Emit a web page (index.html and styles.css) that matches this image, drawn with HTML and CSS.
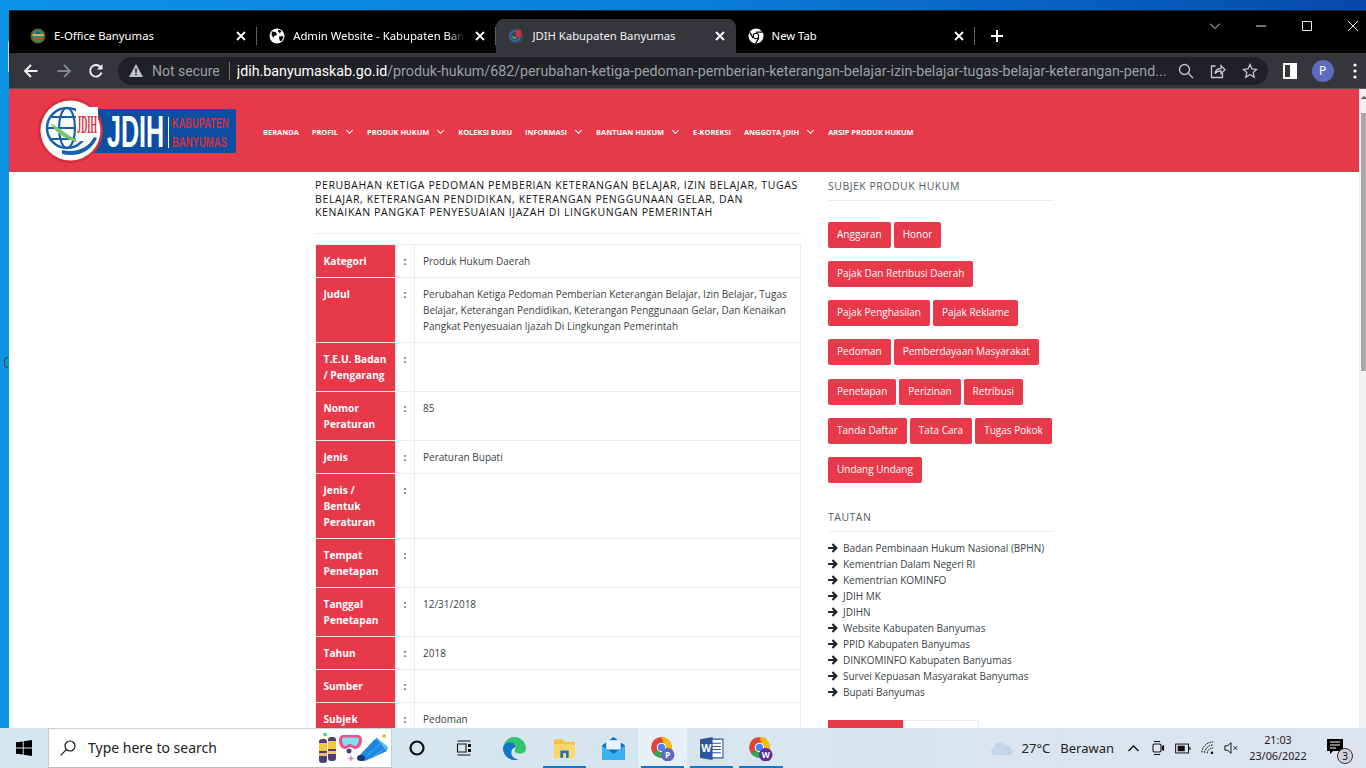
FILE: index.html
```html
<!DOCTYPE html>
<html lang="id">
<head>
<meta charset="utf-8">
<title>JDIH Kabupaten Banyumas</title>
<link rel="stylesheet" href="styles.css">
</head>
<body>
<div class="desktop">
  <span class="edge-sliver"></span>
  <span class="edge-mark"></span>
  <div class="window">
    <div class="tabstrip">
      <div class="tab sep">
        <svg class="fav" viewBox="0 0 16 16"><circle cx="8" cy="8" r="7.5" fill="#6b5a2a"/><circle cx="8" cy="8" r="6" fill="#2f8f6a"/><path d="M2.5 6h11v2h-11z" fill="#d8b13a"/><path d="M3 10h10v2H3z" fill="#c8452f"/><path d="M5 6l3-3 3 3z" fill="#1d4f8f"/></svg>
        <span class="tab-title">E-Office Banyumas</span>
        <svg class="close" viewBox="0 0 10 10"><path d="M1 1l8 8M9 1l-8 8"/></svg>
      </div>
      <div class="tab sep">
        <svg class="fav" viewBox="0 0 16 16"><circle cx="8" cy="8" r="7.5" fill="#fff"/><path d="M3 3.5l3.5.5 1.5 2-1 1.5-2 .5-.5 2-2-3zM9.5 1.500l3 1.500-1.500 2-2-1zM10 8.500l3.500-.5 1 1.500-2.500 4-1.500-1.500z" fill="#000"/></svg>
        <span class="tab-title fade">Admin Website - Kabupaten Banyumas</span>
        <svg class="close" viewBox="0 0 10 10"><path d="M1 1l8 8M9 1l-8 8"/></svg>
      </div>
      <div class="tab active">
        <svg class="fav" viewBox="0 0 16 16"><circle cx="8" cy="8" r="7.5" fill="#3a4a5a"/><circle cx="7" cy="8" r="5" fill="none" stroke="#2a6fb5" stroke-width="1.5"/><path d="M8 2h5v7H8z" fill="#d5303c"/><path d="M3.5 8l4 1 1 2-3 0z" fill="#5cab55"/></svg>
        <span class="tab-title">JDIH Kabupaten Banyumas</span>
        <svg class="close" viewBox="0 0 10 10"><path d="M1 1l8 8M9 1l-8 8"/></svg>
      </div>
      <div class="tab sep">
        <svg class="fav" viewBox="0 0 16 16"><circle cx="8" cy="8" r="7.5" fill="#fff"/><circle cx="8" cy="8" r="3.2" fill="#000"/><circle cx="8" cy="8" r="2.2" fill="#fff"/><path d="M8 4.2h6.4M5 9.8L1.8 4.4M10.9 9.8l-3.2 5.6" stroke="#000" stroke-width="1.3"/></svg>
        <span class="tab-title">New Tab</span>
        <svg class="close" viewBox="0 0 10 10"><path d="M1 1l8 8M9 1l-8 8"/></svg>
      </div>
      <svg class="newtab" viewBox="0 0 14 14"><path d="M7 1v12M1 7h12"/></svg>
      <div class="winctrls">
        <span class="winbtn"><svg viewBox="0 0 10 10"><path d="M0 2.5l5 5 5-5"/></svg></span>
        <span class="winbtn"><svg viewBox="0 0 10 10"><path d="M0 5h10"/></svg></span>
        <span class="winbtn"><svg viewBox="0 0 10 10"><path d="M.5.5h9v9h-9z"/></svg></span>
        <span class="winbtn"><svg viewBox="0 0 10 10"><path d="M0 0l10 10M10 0L0 10"/></svg></span>
      </div>
    </div>

    <div class="toolbar">
      <span class="tbtn"><svg viewBox="0 0 16 16" class="ic"><path d="M14.5 8H2M8 2L2 8l6 6"/></svg></span>
      <span class="tbtn dim"><svg viewBox="0 0 16 16" class="ic"><path d="M1.5 8H14M8 2l6 6-6 6"/></svg></span>
      <span class="tbtn"><svg viewBox="0 0 16 16" class="ic"><path d="M13.5 9.5A5.8 5.8 0 1 1 12.3 4"/><path class="solid" d="M14.5 1v5.5H9z"/></svg></span>
      <div class="omnibox">
        <svg class="warn" viewBox="0 0 14 13"><path d="M7 0l7 13H0z" fill="#bdc1c6"/><path d="M6.3 4.5h1.4v4.3H6.3zM6.3 9.8h1.4v1.4H6.3z" fill="#202124"/></svg>
        <span class="insecure">Not secure</span>
        <span class="omnisep"></span>
        <span class="url"><b>jdih.banyumaskab.go.id</b>/produk-hukum/682/perubahan-ketiga-pedoman-pemberian-keterangan-belajar-izin-belajar-tugas-belajar-keterangan-pend...</span>
        <svg class="oicon" viewBox="0 0 16 16"><circle cx="6.5" cy="6.5" r="5"/><path d="M10.2 10.2L15 15"/></svg>
        <svg class="oicon" viewBox="0 0 16 16"><path d="M5.5 3H1.5v11.5h11V10"/><path d="M5 10.5c.5-3.5 3-5 6-5V2.5l4 4.2-4 4V8c-2.500 0-4.500.5-6 2.500z"/></svg>
        <svg class="oicon" viewBox="0 0 16 16"><path d="M8 1.500l2 4.400 4.700.5-3.500 3.200 1 4.700L8 11.500l-4.200 2.800 1-4.700L1.300 6.400 6 5.900z"/></svg>
      </div>
      <span class="tbtn side"><svg viewBox="0 0 14 16" class="panel"><path d="M0 0h14v16H0z" fill="#fff"/><path d="M2 2h5v12H2z" fill="#35363a"/></svg></span>
      <span class="tbtn"><span class="avatar">P</span></span>
      <span class="tbtn"><svg viewBox="0 0 4 16" class="dots"><circle cx="2" cy="2" r="1.600"/><circle cx="2" cy="8" r="1.600"/><circle cx="2" cy="14" r="1.600"/></svg></span>
    </div>

    <div class="viewport">
      <div class="page">
        <header class="site-header">
          <svg class="logo" viewBox="0 0 198 68">
            <rect x="30" y="12" width="168" height="44" rx="2" fill="#0b4ea2"/>
            <circle cx="32.500" cy="33.500" r="32.500" fill="#d42c39"/>
            <circle cx="32.500" cy="33.500" r="30" fill="#fff"/>
            <circle cx="29" cy="31" r="20" fill="none" stroke="#1660ad" stroke-width="2.500"/>
            <ellipse cx="29" cy="31" rx="8" ry="20" fill="none" stroke="#1660ad" stroke-width="2.200"/>
            <path d="M9 31h40M13 20h32M13 42h32" stroke="#1660ad" stroke-width="2.200"/>
            <path d="M12 26l9 5 8 6 6 4 10 2-8 2-11-5-8-6z" fill="#7cc36b"/>
            <path d="M38 10h22v34H38z" fill="#fff"/>
            <text class="logo-mini" transform="translate(39 36) scale(.32 1)">JDIH</text>
            <path d="M24 53c13 3 26-1 32-13l3 1c-5 13-20 20-35 16z" fill="#1660ad"/>
            <text class="logo-main" transform="translate(69 50) scale(.57 1)">JDIH</text>
            <path d="M130 20h1v31h-1z" fill="#fff"/>
            <text class="logo-sub" transform="translate(134 31) scale(.617 1)">KABUPATEN</text>
            <text class="logo-sub" transform="translate(134 50) scale(.634 1)">BANYUMAS</text>
          </svg>
          <nav class="nav">
            <a class="nav-item">BERANDA</a>
            <a class="nav-item caret">PROFIL</a>
            <a class="nav-item caret">PRODUK HUKUM</a>
            <a class="nav-item">KOLEKSI BUKU</a>
            <a class="nav-item caret">INFORMASI</a>
            <a class="nav-item caret">BANTUAN HUKUM</a>
            <a class="nav-item">E-KOREKSI</a>
            <a class="nav-item caret">ANGGOTA JDIH</a>
            <a class="nav-item">ARSIP PRODUK HUKUM</a>
          </nav>
        </header>
        <div class="content">
          <main class="main-col">
            <h1 class="doc-title">Perubahan Ketiga Pedoman Pemberian Keterangan Belajar, Izin Belajar, Tugas Belajar, Keterangan Pendidikan, Keterangan Penggunaan Gelar, Dan Kenaikan Pangkat Penyesuaian Ijazah Di Lingkungan Pemerintah</h1>
            <table class="doc-table">
              <colgroup><col class="c-label"><col class="c-colon"><col class="c-value"></colgroup>
              <tr><th>Kategori</th><td class="colon">:</td><td>Produk Hukum Daerah</td></tr>
              <tr><th>Judul</th><td class="colon">:</td><td>Perubahan Ketiga Pedoman Pemberian Keterangan Belajar, Izin Belajar, Tugas Belajar, Keterangan Pendidikan, Keterangan Penggunaan Gelar, Dan Kenaikan Pangkat Penyesuaian Ijazah Di Lingkungan Pemerintah</td></tr>
              <tr><th>T.E.U. Badan / Pengarang</th><td class="colon">:</td><td></td></tr>
              <tr><th>Nomor Peraturan</th><td class="colon">:</td><td>85</td></tr>
              <tr><th>Jenis</th><td class="colon">:</td><td>Peraturan Bupati</td></tr>
              <tr><th>Jenis / Bentuk Peraturan</th><td class="colon">:</td><td></td></tr>
              <tr><th>Tempat Penetapan</th><td class="colon">:</td><td></td></tr>
              <tr><th>Tanggal Penetapan</th><td class="colon">:</td><td>12/31/2018</td></tr>
              <tr><th>Tahun</th><td class="colon">:</td><td>2018</td></tr>
              <tr><th>Sumber</th><td class="colon">:</td><td></td></tr>
              <tr><th>Subjek</th><td class="colon">:</td><td>Pedoman</td></tr>
            </table>
          </main>
          <aside class="side-col">
            <h2 class="side-title">Subjek Produk Hukum</h2>
            <div class="chips">
              <a class="chip">Anggaran</a><a class="chip">Honor</a>
              <a class="chip">Pajak Dan Retribusi Daerah</a>
              <a class="chip">Pajak Penghasilan</a><a class="chip">Pajak Reklame</a>
              <a class="chip">Pedoman</a><a class="chip">Pemberdayaan Masyarakat</a>
              <a class="chip">Penetapan</a><a class="chip">Perizinan</a><a class="chip">Retribusi</a>
              <a class="chip">Tanda Daftar</a><a class="chip">Tata Cara</a><a class="chip">Tugas Pokok</a>
              <a class="chip">Undang Undang</a>
            </div>
            <h2 class="side-title links-title">Tautan</h2>
            <ul class="links">
              <li><svg viewBox="0 0 10 10"><path d="M5.200.3l4.700 4.700-4.700 4.700-1.500-1.500 2-2.100H.1V3.900h5.600l-2-2.100z"/></svg>Badan Pembinaan Hukum Nasional (BPHN)</li>
              <li><svg viewBox="0 0 10 10"><path d="M5.200.3l4.700 4.700-4.700 4.700-1.500-1.500 2-2.100H.1V3.900h5.600l-2-2.100z"/></svg>Kementrian Dalam Negeri RI</li>
              <li><svg viewBox="0 0 10 10"><path d="M5.200.3l4.700 4.700-4.700 4.700-1.500-1.500 2-2.100H.1V3.900h5.600l-2-2.100z"/></svg>Kementrian KOMINFO</li>
              <li><svg viewBox="0 0 10 10"><path d="M5.200.3l4.700 4.700-4.700 4.700-1.500-1.500 2-2.100H.1V3.900h5.600l-2-2.100z"/></svg>JDIH MK</li>
              <li><svg viewBox="0 0 10 10"><path d="M5.200.3l4.700 4.700-4.700 4.700-1.500-1.500 2-2.100H.1V3.900h5.600l-2-2.100z"/></svg>JDIHN</li>
              <li><svg viewBox="0 0 10 10"><path d="M5.200.3l4.700 4.700-4.700 4.700-1.500-1.500 2-2.100H.1V3.900h5.600l-2-2.100z"/></svg>Website Kabupaten Banyumas</li>
              <li><svg viewBox="0 0 10 10"><path d="M5.200.3l4.700 4.700-4.700 4.700-1.500-1.500 2-2.100H.1V3.900h5.600l-2-2.100z"/></svg>PPID Kabupaten Banyumas</li>
              <li><svg viewBox="0 0 10 10"><path d="M5.200.3l4.700 4.700-4.700 4.700-1.500-1.500 2-2.100H.1V3.900h5.600l-2-2.100z"/></svg>DINKOMINFO Kabupaten Banyumas</li>
              <li><svg viewBox="0 0 10 10"><path d="M5.200.3l4.700 4.700-4.700 4.700-1.500-1.500 2-2.100H.1V3.900h5.600l-2-2.100z"/></svg>Survei Kepuasan Masyarakat Banyumas</li>
              <li><svg viewBox="0 0 10 10"><path d="M5.200.3l4.700 4.700-4.700 4.700-1.500-1.500 2-2.100H.1V3.900h5.600l-2-2.100z"/></svg>Bupati Banyumas</li>
            </ul>
            <div class="side-tabs"><span class="side-tab on"></span><span class="side-tab"></span></div>
          </aside>
        </div>
      </div>
      <div class="scrollbar"><span class="scroll-up"></span><span class="thumb"></span></div>
    </div>
  </div>

  <footer class="taskbar">
    <span class="start"><svg viewBox="0 0 16 16"><path d="M0 2.300l6.800-.9v6.200H0zM7.700 1.300L16 0v7.600H7.700zM0 8.400h6.800v6.200L0 13.700zM7.700 8.400H16V16l-8.300-1.200z"/></svg></span>
    <div class="searchbox">
      <svg class="glass" viewBox="0 0 16 16"><circle cx="10" cy="6" r="5"/><path d="M6.300 9.700L.7 15.300"/></svg>
      <span class="search-text">Type here to search</span>
      <svg class="doodle" viewBox="0 0 72 32">
        <circle cx="8" cy="2.500" r="1.800" fill="#3fcf7a"/>
        <rect x="2" y="7" width="8" height="24" rx="3" fill="#4a3f78"/><rect x="2" y="11" width="8" height="8" fill="#f0c93a"/><rect x="2" y="21" width="8" height="3" fill="#f0c93a"/>
        <rect x="11" y="5" width="8" height="24" rx="3" fill="#4a3f78"/><rect x="11" y="9" width="8" height="8" fill="#f0c93a"/><rect x="11" y="19" width="8" height="3" fill="#f0c93a"/>
        <path d="M22 8c0-3 2-5 5-5h13c3 0 5 2 5 5 0 5-3 9-7 9-2 0-3-2-5-2s-3 2-5 2c-4 0-6-4-6-9z" fill="#f0508a"/>
        <path d="M25 7c0-1 1-1.500 2-1.500h13c1 0 2 .5 2 1.500 0 3-2 7-4 7-2 0-3-2-5-2s-3 2-5 2c-2 0-3-4-3-7z" fill="#7fe0f0"/>
        <circle cx="32" cy="19" r="2.500" fill="#4a3f78"/>
        <path d="M34 23l1 2.500 2.500 1-2.500 1-1 2.500-1-2.500-2.500-1 2.500-1z" fill="#e87fe0"/>
        <path d="M41 25l16-17 3-2 10 13-20 9c-3 1.500-9 2-9-3z" fill="#1e86e0"/>
        <path d="M59 5l12 10-1 4-11-13z" fill="#5cb8f5"/>
        <path d="M50 24l14-13M55 26l13-10" stroke="#5cb8f5" stroke-width=".8"/>
        <ellipse cx="44" cy="26" rx="4" ry="3" fill="#17357a"/>
        <circle cx="67" cy="4" r="1.800" fill="#f5a623"/>
      </svg>
    </div>
    <span class="tb cortana"><svg viewBox="0 0 16 16"><circle cx="8" cy="8" r="6.500"/></svg></span>
    <span class="tb taskview"><svg viewBox="0 0 16 16"><path d="M1.500 1h13M1.500 15h13M1.500 4h8.500v8H1.500z"/><path class="solid" d="M12 4h3v3h-3zM12 9h3v3h-3z"/></svg></span>
    <span class="tb"><svg class="app" viewBox="0 0 24 24"><path d="M12 1a11 11 0 0 1 11 11c0 3.500-3 5-6 5-2.500 0-5-1-5-3 0-1 1-1 1-3 0-3-3-5-6-4.500C3.500 7 1.500 9 1 12 1.500 5.500 6 1 12 1z" fill="#35c46f"/><path d="M1 12c0-3 3-6 6.500-6 3 0 5.500 2 5.500 5-2 0-4 2-4 5s2.500 6 7 6.500c-1.500.5-2.500 .5-4 .5C6 23 1 18 1 12z" fill="#0f78c8"/></svg></span>
    <span class="tb running"><svg class="app" viewBox="0 0 24 24"><path d="M2 3h8l2 2.500h10V21H2z" fill="#f5c242"/><path d="M2 8h20v13H2z" fill="#fbd86d"/><path d="M8 14h8v7H8z" fill="#1d6fb8"/><path d="M10.500 16.500h3V21h-3z" fill="#fbd86d"/></svg></span>
    <span class="tb"><svg class="app" viewBox="0 0 24 24"><path d="M1 9L12 1l11 8v14H1z" fill="#0f6cbd"/><path d="M5 4h14v9H5z" fill="#e8f3fb"/><path d="M1 9l11 8 11-8v14H1z" fill="#38b3f0"/></svg></span>
    <span class="tb running current"><svg class="app" viewBox="0 0 24 24"><circle cx="11" cy="11" r="10" fill="#e0453a"/><path d="M11 11L3 17a10 10 0 0 0 14 2z" fill="#34a853"/><path d="M11 1a10 10 0 0 1 9.500 13L14 10z" fill="#fbbc05"/><circle cx="11" cy="11" r="4.500" fill="#fff"/><circle cx="11" cy="11" r="3.500" fill="#4285f4"/><circle cx="17" cy="18" r="6.500" fill="#5c6bc0"/><text class="badge-l" x="17" y="21.200">P</text></svg></span>
    <span class="tb running"><svg class="app word" viewBox="0 0 24 24"><path d="M8 3h15v18H8z" fill="#fff" stroke="#2b579a"/><path d="M12 7h9M12 10h9M12 13h9M12 16h9" stroke="#2b579a"/><path d="M1 3l12-2v22L1 21z" fill="#2b579a"/><text class="badge-w" x="7" y="15.500">W</text></svg></span>
    <span class="tb running"><svg class="app" viewBox="0 0 24 24"><circle cx="11" cy="11" r="10" fill="#e0453a"/><path d="M11 11L3 17a10 10 0 0 0 14 2z" fill="#34a853"/><path d="M11 1a10 10 0 0 1 9.500 13L14 10z" fill="#fbbc05"/><circle cx="11" cy="11" r="4.500" fill="#fff"/><circle cx="11" cy="11" r="3.500" fill="#4285f4"/><circle cx="17" cy="18" r="6.500" fill="#5b2d9e"/><text class="badge-l" x="17" y="21.200">W</text></svg></span>

    <div class="tray">
      <svg class="cloud" viewBox="0 0 24 16"><path d="M5 15a4 4 0 0 1-1-7.800A6 6 0 0 1 15 5a4.500 4.500 0 0 1 6 4.500A3 3 0 0 1 20 15z" fill="#c3d6e8"/></svg>
      <span class="temp">27°C</span>
      <span class="weather">Berawan</span>
      <svg class="t-ic caret-up" viewBox="0 0 12 8"><path d="M1 7l5-5 5 5"/></svg>
      <svg class="t-ic meet" viewBox="0 0 14 16"><path d="M3 1.500h6M3 14.500h6"/><rect x="2" y="4" width="8" height="8" rx="1.500"/><path class="solid" d="M11 6l2-1v6l-2-1z"/></svg>
      <svg class="t-ic batt" viewBox="0 0 18 12"><rect x=".7" y="1" width="14.500" height="10"/><path class="solid" d="M3 3h8v6H3zM16 4.500h1.500v3H16z"/></svg>
      <svg class="t-ic wifi" viewBox="0 0 16 16"><path d="M1 13C1 7 7 1 14 1M4 13.500C4 9 9 4.500 14 4.500M7 14c0-3 3-6 7-6" stroke-dasharray="2 1"/><circle class="solid" cx="12.500" cy="13.500" r="1.500"/></svg>
      <svg class="t-ic mute" viewBox="0 0 16 16"><path d="M1 5.500h3L8 2v12l-4-3.500H1z"/><path d="M11 6l4 4M15 6l-4 4"/></svg>
      <div class="clock"><span>21:03</span><span>23/06/2022</span></div>
      <div class="notif">
        <svg viewBox="0 0 16 16"><path d="M0 0h16v12H6l-3 3v-3H0z"/><path d="M3 3h10M3 6h10M3 9h6" stroke="#fff"/></svg>
        <span class="notif-count">3</span>
      </div>
    </div>
  </footer>
</div>
</body>
</html>
```
FILE: styles.css
```css
* { box-sizing: border-box; }
html, body { margin: 0; height: 100%; overflow: hidden; }
svg { display: block; flex: none; }

.desktop {
  position: relative;
  width: 1366px;
  height: 768px;
  display: grid;
  grid-template-rows: 1fr 40px;
  padding-top: 10px;
  background: linear-gradient(90deg, #0c93e6 0%, #0a7fd8 50%, #0649ab 100%);
  overflow: hidden;
}
.edge-sliver { position: absolute; left: 8px; top: 42px; width: 1px; height: 30px; background: #c9d3da; }
.edge-mark { position: absolute; left: 4px; top: 357px; width: 4px; height: 11px; border: 1px solid #444; border-right: 0; border-radius: 4px 0 0 4px; }

.window {
  margin-left: 9px;
  min-width: 0;
  min-height: 0;
  display: flex;
  flex-direction: column;
  overflow: hidden;
  background: #fff;
  border-top: 1px solid #1a2a3a;
}

/* tabs */
.tabstrip {
  flex: none;
  height: 42px;
  padding-left: 9px;
  display: flex;
  align-items: flex-end;
  background: #000;
  font: 11.300px/16px "Noto Sans", "Open Sans", sans-serif;
  color: #fff;
}
.tab {
  position: relative;
  flex: none;
  width: 239.200px;
  height: 34px;
  padding: 0 9px 0 12px;
  display: flex;
  align-items: center;
  gap: 8px;
}
.tab.sep::after { content: ""; position: absolute; right: 0; top: 8px; width: 1px; height: 18px; background: #5f6368; }
.tab.active { background: #35363a; border-radius: 8px 8px 0 0; color: #f1f3f4; }
.fav { width: 16px; height: 16px; }
.tab-title { flex: 1; min-width: 0; white-space: nowrap; overflow: hidden; }
.tab-title.fade { -webkit-mask-image: linear-gradient(90deg, #000 90%, transparent 100%); mask-image: linear-gradient(90deg, #000 90%, transparent 100%); }
.close { width: 10px; height: 10px; margin: 0 2px; fill: none; stroke: #fff; stroke-width: 1.800; }
.newtab { width: 14px; height: 14px; margin: 0 0 10px 15px; fill: none; stroke: #fff; stroke-width: 2; }
.winctrls { margin-left: auto; margin-right: -10px; align-self: flex-start; display: flex; }
.winbtn { width: 46px; height: 30px; display: flex; align-items: center; justify-content: center; }
.winbtn svg { width: 10px; height: 10px; fill: none; stroke: #e8eaed; stroke-width: 1; }

/* toolbar */
.toolbar {
  flex: none;
  height: 36px;
  padding-left: 6px;
  display: flex;
  align-items: center;
  background: #35363a;
  border-bottom: 1px solid #55575b;
}
.tbtn { flex: none; width: 32.500px; height: 28px; display: flex; align-items: center; justify-content: center; }
.ic { width: 16px; height: 16px; fill: none; stroke: #f1f3f4; stroke-width: 1.900; }
.tbtn.dim .ic { stroke: #80868b; }
.solid { fill: #f1f3f4; stroke: none; }
.omnibox {
  flex: none;
  width: 1150px;
  height: 28px;
  margin: 0 6px 0 5.500px;
  padding: 0 10px 0 11px;
  display: flex;
  align-items: center;
  background: #202124;
  border-radius: 14px;
  font: 14.250px/18px Roboto, "Noto Sans", sans-serif;
  color: #9aa0a6;
}
.warn { width: 14px; height: 13px; }
.insecure { margin-left: 9px; font-size: 14px; white-space: nowrap; }
.omnisep { width: 1px; height: 18px; margin: 0 7px 0 9px; background: #70757a; }
.url { flex: 1; min-width: 0; overflow: hidden; white-space: nowrap; }
.url b { font-weight: 400; color: #fff; }
.oicon { width: 16px; height: 16px; margin-left: 16px; fill: none; stroke: #c4c7cb; stroke-width: 1.300; }
.url + .oicon { margin-left: 8px; }
.panel { width: 14px; height: 16px; }
.avatar { width: 22px; height: 22px; border-radius: 50%; background: #5c6bc0; color: #fff; font: 12px/22px "Noto Sans", sans-serif; text-align: center; }
.dots { width: 4px; height: 16px; fill: #fff; }

/* page */
.viewport { flex: 1; min-height: 0; display: flex; background: #fff; }
.page { flex: none; width: 1350px; overflow: hidden; }
.scrollbar { flex: none; width: 7px; padding-top: 24px; background: #f1f1f1; position: relative; }
.scroll-up { position: absolute; top: 7px; left: 2px; width: 0; height: 0; border: 3px solid transparent; border-bottom-color: #555; border-top: 0; }
.thumb { display: block; width: 5px; height: 258px; margin-left: 2px; background: #a8a8a8; }

.site-header { height: 83px; padding-left: 29px; display: flex; align-items: center; background: #e8394a; }
.logo { width: 198px; height: 68px; }
.logo-main { font: 700 44px "Liberation Sans", sans-serif; fill: #fff; }
.logo-sub { font: 700 15px "Liberation Sans", sans-serif; fill: #d5303c; }
.logo-mini { font: 700 26px "Liberation Serif", serif; fill: #d5303c; }
.nav { margin: 2px 0 0 27px; display: flex; gap: 13px; font: 700 7.430px/12px "Open Sans", sans-serif; color: #fff; }
.nav-item { display: flex; align-items: center; white-space: nowrap; }
.nav-item.caret::after { content: ""; width: 4px; height: 4px; margin: -2px 2px 0 9px; border-right: 1.100px solid #fff; border-bottom: 1.100px solid #fff; transform: rotate(45deg); }

.content { padding-left: 306px; display: flex; gap: 27px; align-items: flex-start; }
.main-col { flex: none; width: 486px; }
.doc-title {
  margin: 0 0 10px;
  padding: 7px 0 13px;
  border-bottom: 1px solid #e9ecef;
  font: 500 10.500px/13.500px "Open Sans", sans-serif;
  letter-spacing: .63px;
  text-transform: uppercase;
  color: #111;
}
.doc-table {
  width: 486px;
  table-layout: fixed;
  border-collapse: collapse;
  font: 10px/16px "Open Sans", sans-serif;
  color: #3a3f44;
}
.c-label { width: 80px; }
.c-colon { width: 19px; }
.doc-table th, .doc-table td { padding: 8px; border: 1px solid #e9ecef; vertical-align: top; text-align: left; }
.doc-table th { padding: 8px 4px 8px 7.500px; background: #e8394a; color: #fff; font-size: 10.200px; font-weight: 700; }
.doc-table .colon { padding: 8px 0; text-align: center; font-weight: 700; color: #555; }

.side-col { flex: none; width: 226px; }
.side-title {
  margin: 0;
  padding: 6px 0;
  border-bottom: 1px solid #e9ecef;
  font: 500 10.500px/16px "Open Sans", sans-serif;
  letter-spacing: .5px;
  text-transform: uppercase;
  color: #555b62;
}
.chips { margin: 20.500px 0 25.500px; display: flex; flex-wrap: wrap; gap: 13.330px 3px; }
.chip { height: 26px; padding: 0 9px; background: #e8394a; border-radius: 2px; color: #fff; font: 10px/25px "Open Sans", sans-serif; white-space: nowrap; }
.links-title { padding-top: 0; }
.links { margin: 8px 0 20px; padding: 0; list-style: none; font: 10px/16px "Open Sans", sans-serif; color: #3a3f44; }
.links li { display: flex; align-items: center; gap: 5px; }
.links svg { width: 10px; height: 10px; fill: #212529; }
.side-tabs { display: flex; height: 30px; }
.side-tab { width: 76px; border: 1px solid #e9ecef; }
.side-tab.on { width: 75px; background: #e8394a; border-color: #e8394a; }

/* taskbar */
.taskbar {
  display: flex;
  align-items: center;
  background: linear-gradient(90deg, #d4e6ef 0%, #d7e6ee 50%, #dde3ef 100%);
  position: relative;
}
.start { flex: none; width: 48px; display: flex; justify-content: center; }
.start svg { width: 16px; height: 16px; fill: #000; }
.searchbox {
  flex: none;
  width: 344px;
  height: 40px;
  padding-left: 11px;
  display: flex;
  align-items: center;
  background: #fff;
  border: 1px solid #c6ccd0;
  border-bottom-color: #b9c0c4;
}
.glass { width: 16px; height: 16px; fill: none; stroke: #111; stroke-width: 1.200; }
.search-text { margin-left: 12px; font: 14px/18px "Noto Sans", "Open Sans", sans-serif; color: #222; white-space: nowrap; flex: 1; }
.doodle { width: 72px; height: 32px; margin-right: 2px; }
.tb { flex: none; width: 49.200px; height: 40px; display: flex; align-items: center; justify-content: center; position: relative; }
.cortana svg { width: 16px; height: 16px; fill: none; stroke: #111; stroke-width: 2.200; }
.taskview svg { width: 16px; height: 16px; margin-right: 4px; fill: none; stroke: #111; stroke-width: 1.100; }
.taskview .solid { fill: #111; }
.app { width: 25px; height: 25px; }
.running::after { content: ""; position: absolute; left: 3px; right: 3px; bottom: 0; height: 2px; background: #0f78d4; }
.current { background: #e6f0f5; }
.badge-l { font: 700 8px "Noto Sans", sans-serif; fill: #fff; text-anchor: middle; }
.badge-w { font: 700 10px "Noto Sans", sans-serif; fill: #fff; text-anchor: middle; }

.tray { margin-left: auto; display: flex; align-items: center; color: #222; font: 13px/16px "Noto Sans", "Open Sans", sans-serif; }
.cloud { width: 24px; height: 16px; }
.temp { margin-left: 8px; }
.weather { margin-left: 10px; }
.t-ic { fill: none; stroke: #111; stroke-width: 1.100; }
.t-ic .solid { fill: #111; }
.caret-up { width: 13px; height: 8px; margin-left: 13px; stroke-width: 1.300; }
.meet { width: 14px; height: 16px; margin-left: 11px; }
.batt { width: 16px; height: 11px; margin-left: 10px; }
.wifi { width: 14px; height: 14px; margin-left: 10px; }
.mute { width: 14px; height: 14px; margin-left: 9px; }
.clock { width: 74px; margin-left: 3px; display: flex; flex-direction: column; align-items: center; font-size: 10.800px; line-height: 16px; }
.notif { position: relative; width: 36px; height: 40px; margin-left: 2px; margin-right: 13px; display: flex; align-items: center; justify-content: center; }
.notif svg { width: 16px; height: 16px; margin-top: -3px; fill: #000; stroke: none; }
.notif-count { position: absolute; left: 20px; top: 20px; width: 16px; height: 16px; border: 1px solid #333; border-radius: 50%; background: #cfd4d8; font-size: 10px; line-height: 14px; text-align: center; color: #111; }
```
